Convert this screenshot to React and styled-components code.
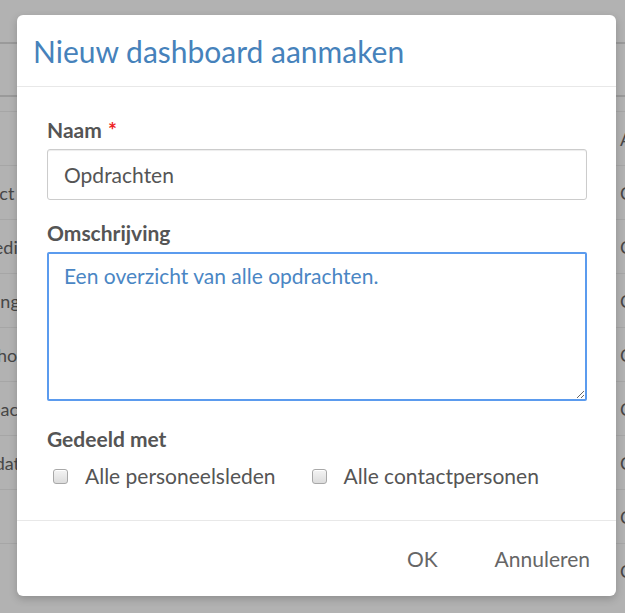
import React from "react";
import styled, { createGlobalStyle } from "styled-components";

const GlobalStyle = createGlobalStyle`
  html, body {
    margin: 0;
    padding: 0;
    overflow: hidden;
    background: #fff;
    font-family: "Lato", "Open Sans", sans-serif;
  }
`;

const rows = [
  ["Contact", "Chris"],
  ["Promedia", "Chris"],
  ["Planning", "Chris"],
  ["Webshop", "Chris"],
  ["Feedback", "Chris"],
  ["Leverdatum", "Chris"],
  ["", "Chris"],
  ["", "Chris"],
];

function Dashboard() {
  return (
    <Wrapper>
      <GlobalStyle />
      <Page>
        <Toolbar />
        <Table>
          <colgroup>
            <col style={{ width: 668 }} />
            <col />
          </colgroup>
          <thead>
            <tr>
              <Th>#</Th>
              <Th>Aangemaakt</Th>
            </tr>
          </thead>
          <tbody>
            {rows.map((r, i) => (
              <tr key={i}>
                <Td>{r[0]}</Td>
                <Td>{r[1]}</Td>
              </tr>
            ))}
          </tbody>
        </Table>
      </Page>

      <Overlay />

      <Modal>
        <Header>
          <Title>Nieuw dashboard aanmaken</Title>
        </Header>
        <Body>
          <Field>
            <Label>
              Naam <Required>*</Required>
            </Label>
            <Input defaultValue="Opdrachten" />
          </Field>
          <Field $gap={26}>
            <Label>Omschrijving</Label>
            <TextArea defaultValue="Een overzicht van alle opdrachten." />
          </Field>
          <Field $gap={0}>
            <Label>Gedeeld met</Label>
            <Checks>
              <Check>
                <Box type="checkbox" />
                Alle personeelsleden
              </Check>
              <Check>
                <Box type="checkbox" />
                Alle contactpersonen
              </Check>
            </Checks>
          </Field>
        </Body>
        <Footer>
          <Button>OK</Button>
          <Button>Annuleren</Button>
        </Footer>
      </Modal>
    </Wrapper>
  );
}

export default Dashboard;

const Wrapper = styled.div`
  width: 625px;
  height: 613px;
  overflow: hidden;
  position: relative;
`;

const Page = styled.div`
  padding-top: 42px;
  margin-left: -48px;
  width: 713px;
`;

const Toolbar = styled.div`
  height: 51px;
  border-top: 2px solid #ddd;
  border-bottom: 2px solid #ddd;
  margin-bottom: 14px;
`;

const Table = styled.table`
  width: 100%;
  table-layout: fixed;
  border-collapse: collapse;
  font-size: 18px;
  color: #666;
`;

const Th = styled.th`
  text-align: left;
  font-weight: 400;
  height: 53px;
  border-top: 1px solid #eee;
  padding: 0;
  white-space: nowrap;
  color: transparent;
  &:last-child {
    color: #666;
  }
`;

const Td = styled.td`
  height: 53px;
  border-top: 1px solid #eee;
  padding: 0;
  white-space: nowrap;
  overflow: hidden;
`;

const Overlay = styled.div`
  position: absolute;
  inset: 0;
  background: rgba(0, 0, 0, 0.3);
`;

const Modal = styled.div`
  position: absolute;
  left: 17px;
  top: 15px;
  width: 599px;
  height: 581px;
  background: #fff;
  border-radius: 6px;
  box-shadow: 0 3px 9px rgba(0, 0, 0, 0.2);
  display: flex;
  flex-direction: column;
`;

const Header = styled.div`
  height: 71px;
  border-bottom: 1px solid #e8e8e8;
  padding: 0 16px;
  display: flex;
  align-items: center;
`;

const Title = styled.h4`
  margin: 0;
  font-size: 30px;
  line-height: 1.2;
  font-weight: 400;
  color: #4682bb;
`;

const Body = styled.div`
  padding: 31px 29px 32px 30px;
  border-bottom: 1px solid #e8e8e8;
`;

const Field = styled.div`
  display: flex;
  flex-direction: column;
  margin-bottom: ${(p) => (p.$gap === undefined ? 21 : p.$gap)}px;
`;

const Label = styled.label`
  font-size: 21px;
  line-height: 24px;
  font-weight: 700;
  color: #555;
  margin-bottom: 7px;
`;

const Required = styled.span`
  color: #e22;
  margin-left: 1px;
`;

const Input = styled.input`
  box-sizing: border-box;
  height: 51px;
  width: 100%;
  border: 1px solid #ccc;
  border-radius: 3px;
  padding: 0 16px;
  font-family: "Lato", sans-serif;
  font-size: 21px;
  color: #555;
  box-shadow: inset 0 1px 1px rgba(0, 0, 0, 0.075);
  outline: none;
`;

const TextArea = styled.textarea`
  box-sizing: border-box;
  height: 149px;
  width: 100%;
  border: 2px solid #5b9bee;
  border-radius: 2px;
  padding: 9px 15px;
  font-family: "Lato", sans-serif;
  font-size: 21px;
  line-height: 25.6px;
  color: #4a86c4;
  outline: none;
  resize: vertical;
`;

const Checks = styled.div`
  display: flex;
  gap: 36px;
  margin-top: 6px;
  padding-left: 6px;
`;

const Check = styled.label`
  display: flex;
  align-items: center;
  gap: 17px;
  font-size: 21px;
  line-height: 24px;
  color: #555;
`;

const Box = styled.input`
  appearance: none;
  margin: 0;
  width: 15px;
  height: 15px;
  border: 1px solid #a8a8a8;
  border-radius: 3px;
  background: linear-gradient(#f4f4f4, #dcdcdc);
  box-shadow: inset 0 1px 0 #fff;
`;

const Footer = styled.div`
  flex: 1;
  display: flex;
  justify-content: flex-end;
  align-items: center;
  gap: 29px;
  padding-right: 12px;
`;

const Button = styled.button`
  border: none;
  background: none;
  padding: 6px 14px;
  font-family: "Lato", sans-serif;
  font-size: 21px;
  line-height: 1.2;
  color: #666;
  cursor: pointer;
`;
